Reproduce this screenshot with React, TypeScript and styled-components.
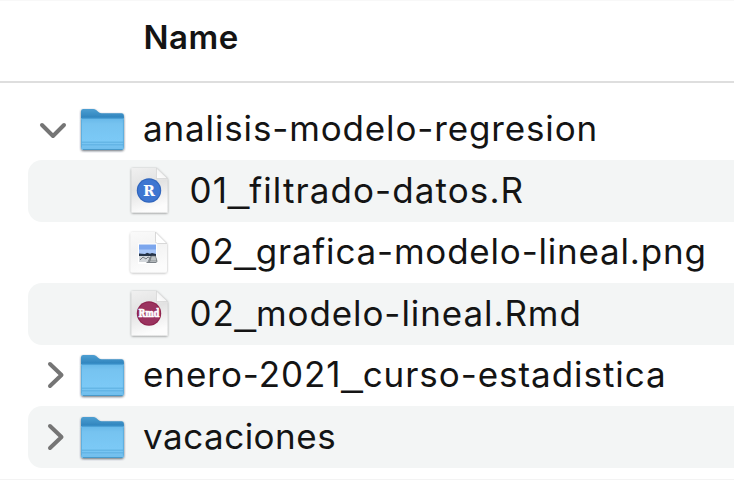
import React from "react";
import styled, { createGlobalStyle } from "styled-components";

const GlobalStyle = createGlobalStyle`
  body { margin: 0; background: #fff; overflow: hidden; }
  *, *::before, *::after { box-sizing: border-box; }
`;

const Window = styled.main`
  width: 734px;
  height: 480px;
  display: flex;
  flex-direction: column;
  background: #fff;
  border-top: 1px solid #f8f8f8;
  border-bottom: 1px solid #f3f3f3;
  font-family: Inter, "Liberation Sans", sans-serif;
  color: #141414;
  overflow: hidden;
`;

const Header = styled.header`
  flex: none;
  height: 82px;
  padding: 16px 0 0 143.5px;
  border-bottom: 2px solid #dedede;
  font-size: 33px;
  line-height: 40px;
  font-weight: 600;
  letter-spacing: 0.5px;
`;

const List = styled.div`
  flex: none;
  display: flex;
  flex-direction: column;
  padding: 15.5px 0 0 28px;
`;

const Row = styled.div<{ $striped: boolean }>`
  height: 61.5px;
  display: flex;
  align-items: center;
  border-radius: 14px 0 0 14px;
  background: ${(p) => (p.$striped ? "#f3f5f5" : "transparent")};
`;

const Disclosure = styled.span`
  flex: none;
  width: 50px;
  height: 46px;
`;

const IconSlot = styled.span<{ $nested: boolean }>`
  flex: none;
  width: ${(p) => (p.$nested ? 63 : 65)}px;
  height: 52px;
  margin-left: ${(p) => (p.$nested ? 98.5 : 0)}px;
  svg { display: block; }
`;

const Label = styled.span<{ $spacing: number }>`
  font-size: 35px;
  line-height: 44px;
  letter-spacing: ${(p) => p.$spacing}px;
  white-space: nowrap;
  margin-top: -2px;
`;

const Underscore = styled.span`
  font-family: "Liberation Sans", sans-serif;
  font-size: 38px;
  line-height: 0;
  letter-spacing: 0;
  vertical-align: 2px;
`;

const Chevron = ({ open }: { open: boolean }) => (
  <svg width="50" height="46" viewBox="0 0 50 46" fill="none" stroke="#757575" strokeWidth="4" strokeLinecap="round" strokeLinejoin="round">
    <path d={open ? "M14 19 L25 30 L36 19" : "M22 12 L33.5 23 L22 34"} />
  </svg>
);

const Folder = () => (
  <svg width="56" height="52" viewBox="0 -2.5 56 52">
    <defs>
      <linearGradient id="folderBack" x2="0" y2="1">
        <stop offset="0" stopColor="#4d9fd2" />
        <stop offset="0.25" stopColor="#2b80ba" />
        <stop offset="1" stopColor="#2e84c2" />
      </linearGradient>
      <linearGradient id="folderFront" x2="0" y2="1">
        <stop offset="0" stopColor="#66b7e8" />
        <stop offset="0.2" stopColor="#76c3f0" />
        <stop offset="0.7" stopColor="#7bc9f6" />
        <stop offset="1" stopColor="#70bdec" />
      </linearGradient>
      <filter id="folderShadow" x="-10%" y="-10%" width="120%" height="125%">
        <feDropShadow dx="0" dy="1" stdDeviation="1" floodColor="#25343f" floodOpacity="0.7" />
      </filter>
    </defs>
    <g filter="url(#folderShadow)">
      <path d="M3 5.800q0-2.400 2.400-2.400h9.800q1.600 0 2.900 1.100l2.600 2.300q1.200 1 2.800 1h20q2.400 0 2.400 2.400V41q0 3-3 3H6q-3 0-3-3z" fill="url(#folderBack)" />
      <path d="M3 13.700q0-1.700 1.700-1.700h39.500q1.700 0 1.700 1.700V42q0 2.500-2.500 2.500H5.500q-2.500 0-2.500-2.500z" fill="url(#folderFront)" />
    </g>
    <path d="M4 12.300h41" stroke="#3187c2" strokeWidth="1.200" />
    <path d="M3.500 36.700h42M3.500 39.300h42" stroke="#57a9dc" strokeWidth="0.800" />
    <path d="M3.500 14v28M45.400 14v28" stroke="#58a9da" strokeWidth="0.800" />
    <path d="M5 44h39.500" stroke="#499aca" strokeWidth="1" />
  </svg>
);

type PageKind = "r" | "image" | "rmd";

const PageIcon = ({ kind }: { kind: PageKind }) => (
  <svg width="44" height="52" viewBox="0 0 44 52">
    <defs>
      <linearGradient id={`page-${kind}`} x1="0" y1="0" x2="0.25" y2="1">
        <stop offset="0" stopColor={kind === "image" ? "#fafafa" : "#f0f0f0"} />
        <stop offset="0.48" stopColor={kind === "image" ? "#f3f3f3" : "#e2e2e2"} />
        <stop offset="1" stopColor="#fcfcfc" />
      </linearGradient>
      <linearGradient id={`fold-${kind}`} x1="0" y1="1" x2="1" y2="0">
        <stop offset="0" stopColor="#fff" />
        <stop offset="0.6" stopColor="#f4f4f4" />
        <stop offset="1" stopColor="#ccc" />
      </linearGradient>
      <filter id={`shadow-${kind}`} x="-15%" y="-10%" width="130%" height="125%">
        <feDropShadow dx="0" dy="0.7" stdDeviation="0.8" floodColor="#000" floodOpacity={kind === "image" ? 0.32 : 0.5} />
      </filter>
    </defs>
    {kind === "image" ? (
      <>
        <path d="M5.500 6H28.500L40 17.500V44.500q0 2-2 2h-32.500q-2 0-2-2V8q0-2 2-2z" fill="url(#page-image)" filter="url(#shadow-image)" />
        <path d="M28.500 6V15.500q0 2 2 2h9.500z" fill="#fff" stroke="#d4d4d4" strokeWidth="0.900" />
        <rect x="11" y="17.500" width="19" height="20.500" fill="#fff" />
        <path d="M12 18.500h17v10H12z" fill="#7ca6ed" />
        <path d="M12 23.500h17v4.500H12z" fill="#a8c6f7" />
        <path d="M12 27.500l6 .5 2-1.300 3 1 2-.7 4 1v2H12z" fill="#253347" />
        <path d="M12 30h17v6H12z" fill="#d3d7db" />
        <path d="M13 34l3-3 3 2 2-2 2 1-2 4M24 30l-1.500 6M28 30l2 6M19.500 36.500h10" fill="none" stroke="#6b7278" strokeWidth="0.900" />
        <path d="M24.500 30h4l1.500 5h-7z" fill="#bfc4c6" stroke="#666d71" strokeWidth="0.600" />
      </>
    ) : (
      <>
        <path d="M5.500 3H29.500L40.500 13.500V47.500H5.500q-1 0-1-1V4q0-1 1-1z" fill={`url(#page-${kind})`} filter={`url(#shadow-${kind})`} />
        <path d="M29.500 3V13.500H40.500z" fill={`url(#fold-${kind})`} stroke="#cfcfcf" strokeWidth="0.600" />
        <circle cx="22" cy="25.500" r="12.200" fill={kind === "r" ? "#3166bd" : "#8f244f"} />
        <circle cx="22" cy="25.500" r="11" fill={kind === "r" ? "#3e76d1" : "#9b335f"} />
        <text
          x="22"
          y={kind === "r" ? 31 : 29}
          textAnchor="middle"
          textLength={kind === "r" ? 11.5 : 21}
          lengthAdjust="spacingAndGlyphs"
          fontFamily="DejaVu Serif, serif"
          fontWeight="700"
          fontSize={kind === "r" ? 15 : 11}
          fill="#fff"
          stroke="#fff"
          strokeWidth={kind === "r" ? 0.2 : 0.7}
        >
          {kind === "r" ? "R" : "Rmd"}
        </text>
      </>
    )}
  </svg>
);

interface Entry {
  name: string;
  icon: "folder" | PageKind;
  open?: boolean;
  spacing: number;
}

const entries: Entry[] = [
  { name: "analisis-modelo-regresion", icon: "folder", open: true, spacing: 0.86 },
  { name: "01_filtrado-datos.R", icon: "r", spacing: 1.1 },
  { name: "02_grafica-modelo-lineal.png", icon: "image", spacing: 0.8 },
  { name: "02_modelo-lineal.Rmd", icon: "rmd", spacing: 0.92 },
  { name: "enero-2021_curso-estadistica", icon: "folder", spacing: 0.95 },
  { name: "vacaciones", icon: "folder", spacing: 0.5 },
];

const FileName = ({ name, spacing }: { name: string; spacing: number }) => {
  const [head, tail] = name.split("_");
  return (
    <Label $spacing={spacing}>
      {head}
      {tail && <Underscore>_</Underscore>}
      {tail}
    </Label>
  );
};

export default function App() {
  return (
    <Window>
      <GlobalStyle />
      <Header>Name</Header>
      <List>
        {entries.map((entry, index) => {
          const isFolder = entry.icon === "folder";
          return (
            <Row key={entry.name} $striped={index % 2 === 1}>
              {isFolder && (
                <Disclosure>
                  <Chevron open={!!entry.open} />
                </Disclosure>
              )}
              <IconSlot $nested={!isFolder}>
                {entry.icon === "folder" ? <Folder /> : <PageIcon kind={entry.icon} />}
              </IconSlot>
              <FileName name={entry.name} spacing={entry.spacing} />
            </Row>
          );
        })}
      </List>
    </Window>
  );
}
